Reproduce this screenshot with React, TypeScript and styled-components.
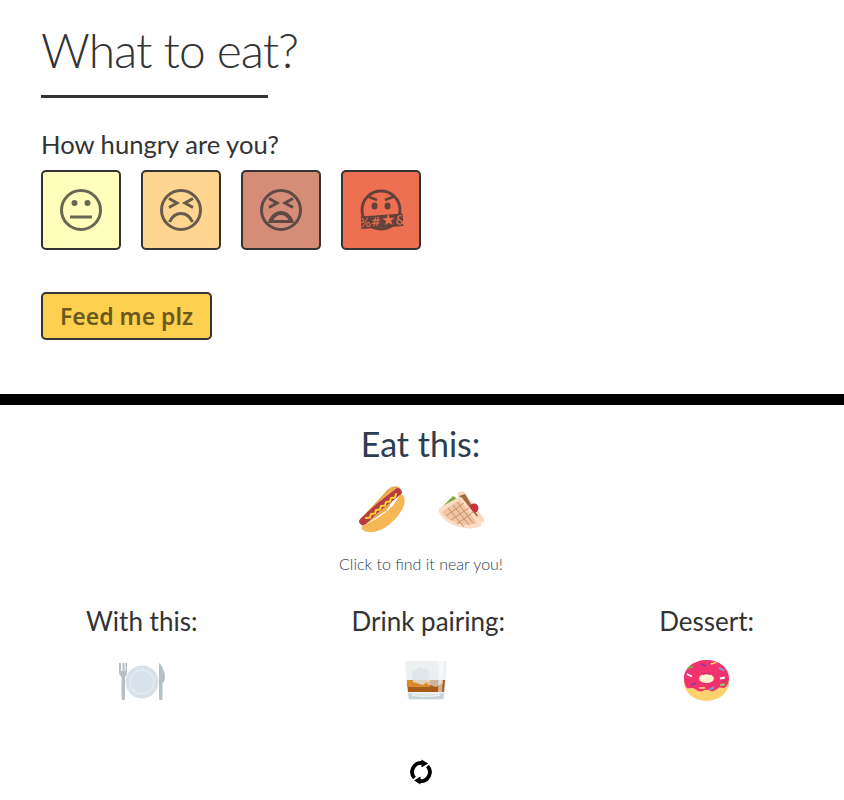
import React from 'react'
import styled, { createGlobalStyle } from 'styled-components'

const GlobalStyle = createGlobalStyle`
  html, body {
    margin: 0;
    padding: 0;
    background: #fff;
    font-family: Lato, "Liberation Sans", sans-serif;
    color: #333;
  }
`

const Top = styled.section`
  height: 394px;
  box-sizing: border-box;
  padding: 20px 41px 0;
`

const Title = styled.h1`
  width: 227px;
  margin: 0;
  height: 78px;
  box-sizing: border-box;
  border-bottom: 3px solid #333;
  font-size: 48px;
  line-height: 60px;
  font-weight: 300;
  letter-spacing: -1px;
  white-space: nowrap;
`

const Question = styled.p`
  margin: 31px 0 11px;
  font-size: 25.6px;
  line-height: 30px;
  color: #333;
`

const Moods = styled.div`
  display: flex;
  gap: 20px;
`

const Mood = styled.button<{ $bg: string }>`
  display: flex;
  align-items: center;
  justify-content: center;
  width: 80px;
  height: 80px;
  padding: 0;
  border: 2px solid #333;
  border-radius: 5px;
  background: ${p => p.$bg};
  color: #333;
`

const Face = styled.svg`
  width: 48px;
  height: 48px;
  opacity: 0.74;
`

const FeedButton = styled.button`
  display: block;
  margin-top: 42px;
  width: 171px;
  height: 48px;
  padding: 0;
  border: 2px solid #333;
  border-radius: 5px;
  background: #ffcf4f;
  color: #6b5a1e;
  font-family: "Noto Sans", "Open Sans", sans-serif;
  font-size: 23px;
  font-weight: 600;
  line-height: 30px;
`

const Divider = styled.hr`
  height: 11px;
  margin: 0;
  border: 0;
  background: #000;
`

const Results = styled.section`
  display: flex;
  flex-direction: column;
  align-items: center;
`

const MainHeading = styled.h2`
  margin: 19px 3px 0 0;
  font-size: 34px;
  line-height: 40px;
  font-weight: 400;
  color: #2c3e50;
`

const MainDishes = styled.div`
  display: flex;
  gap: 30px;
  margin-top: 21px;
`

const Dish = styled.svg`
  display: block;
  width: 50px;
  height: 50px;
`

const Hint = styled.p`
  margin: 19px 2px 0 0;
  font-size: 16px;
  line-height: 20px;
  font-weight: 300;
  color: #2c3e50;
`

const Sides = styled.div`
  display: flex;
  justify-content: space-between;
  align-self: stretch;
  margin-top: 32px;
  padding: 0 90px 0 86px;
`

const Side = styled.div`
  display: flex;
  flex-direction: column;
  align-items: center;
  gap: 21px;
`

const SideHeading = styled.h3`
  margin: 0;
  font-size: 26px;
  line-height: 30px;
  font-weight: 400;
  color: #333;
`

const Refresh = styled.button`
  display: flex;
  margin: 52px 3px 0 0;
  padding: 0;
  border: 0;
  background: none;
  color: #000;
`

const NeutralFace = () => (
  <Face viewBox="0 0 48 48" fill="none" stroke="currentColor" strokeWidth="3">
    <circle cx="24" cy="24" r="19.5" />
    <circle cx="17.5" cy="17" r="3" fill="currentColor" stroke="none" />
    <circle cx="30.5" cy="17" r="3" fill="currentColor" stroke="none" />
    <path d="M13 31h22" />
  </Face>
)

const SquintFace = () => (
  <Face viewBox="0 0 48 48" fill="none" stroke="currentColor" strokeWidth="3">
    <circle cx="24" cy="24" r="19.5" />
    <path d="M12 12.5l8 4.5-8 4.5M36 12.5l-8 4.5 8 4.5" />
    <path d="M12.5 36c2.5-5.5 6.5-8.5 11.5-8.5s9 3 11.5 8.5" />
  </Face>
)

const TiredFace = () => (
  <Face viewBox="0 0 48 48" fill="none" stroke="currentColor" strokeWidth="3">
    <circle cx="24" cy="24" r="19.5" />
    <path d="M12 12.5l8 4.5-8 4.5M36 12.5l-8 4.5 8 4.5" />
    <path d="M11 37c1.5-7 6.5-12 13-12s11.5 5 13 12z" fill="currentColor" stroke="none" />
    <path d="M16.5 34c1.5-3 4-5 7.5-5s6 2 7.5 5z" fill="#d68d78" stroke="none" />
  </Face>
)

const CursingFace = () => (
  <Face viewBox="0 0 48 48" fill="none" stroke="currentColor" strokeWidth="2.8">
    <circle cx="24" cy="24" r="19" />
    <path d="M11 10.500l9 3.500M37 10.500l-9 3.500" strokeWidth="2.500" />
    <ellipse cx="17.500" cy="20" rx="3" ry="3.500" fill="currentColor" stroke="none" />
    <ellipse cx="30.500" cy="20" rx="3" ry="3.500" fill="currentColor" stroke="none" />
    <g transform="rotate(-4 25 35)">
      <rect x="4" y="29" width="42" height="12.500" fill="currentColor" stroke="none" />
      <text x="25" y="39.800" textAnchor="middle" fontSize="12.500" fontFamily="'DejaVu Sans', sans-serif" fill="#ee7052" stroke="none">%#<tspan fontSize="16">★</tspan>&amp;</text>
    </g>
  </Face>
)

const HotDog = () => (
  <Dish viewBox="0 0 50 50">
    <path d="M2 36C8 28 22 15 30 5c4-4 10-5 13-2l-13 22L8 40z" fill="#e8ac52" />
    <path d="M6 36.500L21 22.500 41 7" fill="none" stroke="#b93a3f" strokeWidth="7.500" strokeLinecap="round" />
    <path d="M9 33l4-.5 1-3.500 4-.5 1-3.500 4-.5 1-3.500 4-.5 1-3.500 4-.5 1-3.500 4-.5 1-3.500" fill="none" stroke="#ffd83b" strokeWidth="2" strokeLinecap="round" strokeLinejoin="round" />
    <path d="M6 45c6 5 20 1 28-7 8-7 16-18 13-26-2-4-5-2-7 3-6 10-20 19-30 24-5 2-7 3-4 6z" fill="#f6b755" />
  </Dish>
)

const Gyro = () => (
  <Dish viewBox="0 0 50 50">
    <path d="M20 9c2-3 6-3 8-1l19 26c1 2 0 3-1 3h-9z" fill="#fbd5b8" />
    <path d="M22 11l6-2 13 22-5 3z" fill="#9c6a45" />
    <circle cx="37" cy="23" r="4.500" fill="#c9353d" />
    <path d="M5 22l11-11 9 6-15 11z" fill="#72ad46" />
    <path d="M2 27c-1-2 0-3 2-5l16-9c3-2 5-1 6 1l18 23c1 2 1 3-1 4-4 3-13 3-20 1C13 40 4 33 2 27z" fill="#fcdcc4" />
    <path d="M5 27l18-12 17 23c-4 2-11 2-17 1C15 37 8 32 5 27z" fill="#f0c3a2" />
    <path d="M11 23l16 19M16 20l16 20M20 17l16 21M9 31l18-13M14 35l18-12M20 39l16-12" stroke="#c08d69" strokeWidth=".9" fill="none" />
  </Dish>
)

const PlateSetting = () => (
  <Dish viewBox="0 0 50 50">
    <circle cx="25" cy="25" r="16.500" fill="#d8e2ea" />
    <circle cx="25" cy="25" r="12" fill="none" stroke="#eef2f5" strokeWidth="1" />
    <path d="M2 6v9c0 3 1.500 4 2.500 5v21c0 3 3.500 3 3.500 0V20c1-1 2-2 2-5V6H8.500v8H7.500V6H5.500v8H4V6z" fill="#b4bfc6" />
    <path d="M42 6c3 2 6 9 6 14 0 3-1 5-2.500 6v15c0 3-3.500 3-3.500 0z" fill="#b4bfc6" />
  </Dish>
)

const Whisky = () => (
  <Dish viewBox="0 0 50 50">
    <path d="M2 4h42l-2.500 37c0 1-1 2-2 2H6.500c-1 0-2-1-2-2z" fill="#eef1f2" />
    <path d="M4 23h38l-1 12H5z" fill="#a85c1a" />
    <path d="M4 23h24l-1 7H4z" fill="#d98a2b" />
    <path d="M9 15l8-5 9 3 1 10-7 5-10-3z" fill="#dbe5e9" opacity=".8" />
    <path d="M24 18l7-4 8 3 1 9-7 4-9-3z" fill="#e6ebee" opacity=".6" />
    <path d="M5 36c10 2 26 2 36 0l-1 6H6z" fill="#c5d5d9" />
    <path d="M9 38c8 1.500 20 1.500 28 0" fill="none" stroke="#eef3f4" strokeWidth="1.500" />
    <path d="M36 4h5l-2 31h-4z" fill="#fff" opacity=".5" />
  </Dish>
)

const Donut = () => (
  <Dish viewBox="0 0 50 50">
    <ellipse cx="24.500" cy="25" rx="22.500" ry="19" fill="#fdd26e" />
    <path d="M2 21C2 11 12 3 24.500 3S47 11 47 21c0 5-2 9-5 10-2 0-4-1-6 0-3 2-4 4-7 3s-5-2-8 0c-3 1-5 0-8-2-3-2-5 0-8-1-2-2-3-6-3-10z" fill="#f0326f" />
    <ellipse cx="24.500" cy="21.500" rx="7.500" ry="4.500" fill="#fff2cc" />
    <path d="M21 17.500c2-1 5-1 7 0" stroke="#c9215a" strokeWidth="1" fill="none" />
    <path d="M6 11l5-1.500" stroke="#6fba4c" strokeWidth="1.800" />
    <path d="M19 7l5 2" stroke="#7a3fb5" strokeWidth="1.800" />
    <path d="M29 7l5-1.500" stroke="#ffdc5d" strokeWidth="1.800" />
    <path d="M37 11l5 2.500" stroke="#6aa9e0" strokeWidth="1.800" />
    <path d="M5 17l5 2.500M38 21.500l5-1" stroke="#fff" strokeWidth="1.800" />
    <path d="M38 28l5-.5" stroke="#8ccf5e" strokeWidth="1.800" />
    <path d="M9 28l5-2" stroke="#7a3fb5" strokeWidth="1.800" />
    <path d="M17 31h6" stroke="#ffc27a" strokeWidth="1.800" />
    <path d="M27 33l5-3" stroke="#6aa9e0" strokeWidth="1.800" />
  </Dish>
)

const LoopIcon = () => (
  <svg width="24" height="26" viewBox="0 0 24 26" fill="none" stroke="currentColor" strokeWidth="3.800">
    <path d="M13 4A9 9 0 0 0 5.500 19" />
    <path d="M11 22A9 9 0 0 0 18.500 7" />
    <path d="M12.500.5l6.500 4-6.500 4zM11.500 17.500l-6.500 4 6.500 4z" fill="currentColor" stroke="none" />
  </svg>
)

export default function App() {
  return (
    <>
      <GlobalStyle />
      <Top>
        <Title>What to eat?</Title>
        <Question>How hungry are you?</Question>
        <Moods>
          <Mood $bg="#ffffbb"><NeutralFace /></Mood>
          <Mood $bg="#ffd592"><SquintFace /></Mood>
          <Mood $bg="#d68d78"><TiredFace /></Mood>
          <Mood $bg="#ee7052"><CursingFace /></Mood>
        </Moods>
        <FeedButton>Feed me plz</FeedButton>
      </Top>
      <Divider />
      <Results>
        <MainHeading>Eat this:</MainHeading>
        <MainDishes>
          <HotDog />
          <Gyro />
        </MainDishes>
        <Hint>Click to find it near you!</Hint>
        <Sides>
          <Side>
            <SideHeading>With this:</SideHeading>
            <PlateSetting />
          </Side>
          <Side>
            <SideHeading>Drink pairing:</SideHeading>
            <Whisky />
          </Side>
          <Side>
            <SideHeading>Dessert:</SideHeading>
            <Donut />
          </Side>
        </Sides>
        <Refresh aria-label="Refresh"><LoopIcon /></Refresh>
      </Results>
    </>
  )
}
